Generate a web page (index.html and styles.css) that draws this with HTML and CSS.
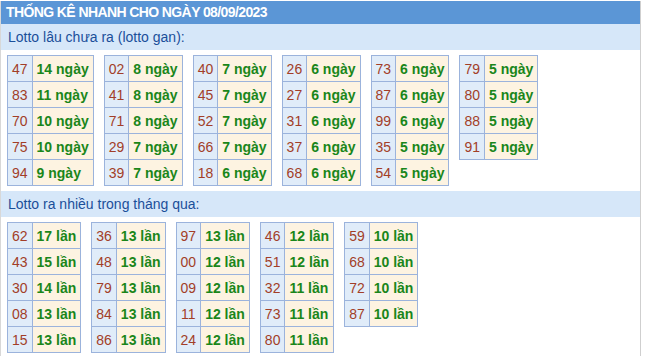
FILE: index.html
```html
<!DOCTYPE html>
<html lang="vi">
<head>
<meta charset="utf-8">
<title>Thống kê nhanh</title>
<link rel="stylesheet" href="styles.css">
</head>
<body>
<div class="box">
  <div class="title">THỐNG KÊ NHANH CHO NGÀY 08/09/2023</div>
  <div class="sub">Lotto lâu chưa ra (lotto gan):</div>
  <div class="tables">
    <table><tr><td class="n">47</td><td class="v">14 ngày</td></tr><tr><td class="n">83</td><td class="v">11 ngày</td></tr><tr><td class="n">70</td><td class="v">10 ngày</td></tr><tr><td class="n">75</td><td class="v">10 ngày</td></tr><tr><td class="n">94</td><td class="v">9 ngày</td></tr></table>
    <table><tr><td class="n">02</td><td class="v">8 ngày</td></tr><tr><td class="n">41</td><td class="v">8 ngày</td></tr><tr><td class="n">71</td><td class="v">8 ngày</td></tr><tr><td class="n">29</td><td class="v">7 ngày</td></tr><tr><td class="n">39</td><td class="v">7 ngày</td></tr></table>
    <table><tr><td class="n">40</td><td class="v">7 ngày</td></tr><tr><td class="n">45</td><td class="v">7 ngày</td></tr><tr><td class="n">52</td><td class="v">7 ngày</td></tr><tr><td class="n">66</td><td class="v">7 ngày</td></tr><tr><td class="n">18</td><td class="v">6 ngày</td></tr></table>
    <table><tr><td class="n">26</td><td class="v">6 ngày</td></tr><tr><td class="n">27</td><td class="v">6 ngày</td></tr><tr><td class="n">31</td><td class="v">6 ngày</td></tr><tr><td class="n">37</td><td class="v">6 ngày</td></tr><tr><td class="n">68</td><td class="v">6 ngày</td></tr></table>
    <table><tr><td class="n">73</td><td class="v">6 ngày</td></tr><tr><td class="n">87</td><td class="v">6 ngày</td></tr><tr><td class="n">99</td><td class="v">6 ngày</td></tr><tr><td class="n">35</td><td class="v">5 ngày</td></tr><tr><td class="n">54</td><td class="v">5 ngày</td></tr></table>
    <table><tr><td class="n">79</td><td class="v">5 ngày</td></tr><tr><td class="n">80</td><td class="v">5 ngày</td></tr><tr><td class="n">88</td><td class="v">5 ngày</td></tr><tr><td class="n">91</td><td class="v">5 ngày</td></tr></table>
  </div>
  <div class="sub">Lotto ra nhiều trong tháng qua:</div>
  <div class="tables">
    <table><tr><td class="n">62</td><td class="v">17 lần</td></tr><tr><td class="n">43</td><td class="v">15 lần</td></tr><tr><td class="n">30</td><td class="v">14 lần</td></tr><tr><td class="n">08</td><td class="v">13 lần</td></tr><tr><td class="n">15</td><td class="v">13 lần</td></tr></table>
    <table><tr><td class="n">36</td><td class="v">13 lần</td></tr><tr><td class="n">48</td><td class="v">13 lần</td></tr><tr><td class="n">79</td><td class="v">13 lần</td></tr><tr><td class="n">84</td><td class="v">13 lần</td></tr><tr><td class="n">86</td><td class="v">13 lần</td></tr></table>
    <table><tr><td class="n">97</td><td class="v">13 lần</td></tr><tr><td class="n">00</td><td class="v">12 lần</td></tr><tr><td class="n">09</td><td class="v">12 lần</td></tr><tr><td class="n">11</td><td class="v">12 lần</td></tr><tr><td class="n">24</td><td class="v">12 lần</td></tr></table>
    <table><tr><td class="n">46</td><td class="v">12 lần</td></tr><tr><td class="n">51</td><td class="v">12 lần</td></tr><tr><td class="n">32</td><td class="v">11 lần</td></tr><tr><td class="n">73</td><td class="v">11 lần</td></tr><tr><td class="n">80</td><td class="v">11 lần</td></tr></table>
    <table><tr><td class="n">59</td><td class="v">10 lần</td></tr><tr><td class="n">68</td><td class="v">10 lần</td></tr><tr><td class="n">72</td><td class="v">10 lần</td></tr><tr><td class="n">87</td><td class="v">10 lần</td></tr></table>
  </div>
</div>
</body>
</html>
```
FILE: styles.css
```css
html, body {
  margin: 0;
  padding: 0;
  background: #ffffff;
}
body {
  font-family: "Liberation Sans", Arial, sans-serif;
  font-size: 14px;
}
.box {
  width: 639px;
  margin-top: 1px;
  border-left: 1px solid #d8d8d8;
  border-right: 1px solid #cfcfcf;
  min-height: 355px;
}
.title {
  height: 23px;
  line-height: 23px;
  background: #5b96d6;
  color: #ffffff;
  font-weight: bold;
  font-size: 14px;
  padding-left: 5px;
  letter-spacing: -0.6px;
}
.sub {
  height: 26px;
  line-height: 26px;
  background: #d6e7f9;
  color: #1b4f9a;
  font-size: 14px;
  padding-left: 7px;
}
.tables {
  display: flex;
  align-items: flex-start;
  gap: 10px;
  padding: 5px 6px 5px 6px;
}
table {
  border-collapse: collapse;
}
td {
  border: 1px solid #9bb3dc;
  height: 25px;
  padding: 0 4px;
  font-size: 14px;
  white-space: nowrap;
}
td.n {
  background: #e0ecf9;
  color: #a23e28;
  text-align: center;
}
td.v {
  background: #fdf3e1;
  color: #1a861a;
  font-weight: bold;
}
```
